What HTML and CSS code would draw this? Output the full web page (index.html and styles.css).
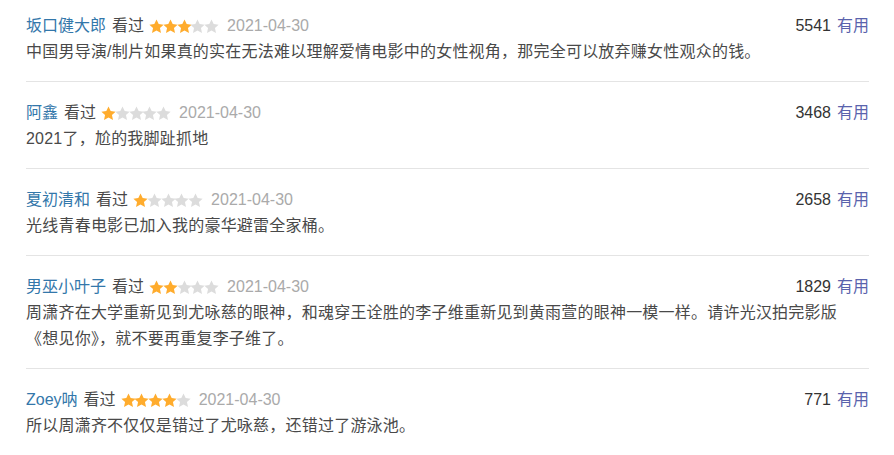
FILE: index.html
```html
<!DOCTYPE html>
<html lang="zh-CN">
<head>
<meta charset="utf-8">
<title>短评</title>
<link rel="stylesheet" href="styles.css">
</head>
<body>
<svg width="0" height="0" class="defs" aria-hidden="true">
  <defs>
    <symbol id="star" viewBox="0 0 20 20">
      <path d="M10 0.8l2.9 6 6.6.8-4.9 4.5 1.4 6.6L10 15.4l-6 3.3 1.4-6.6L.5 7.6l6.6-.8z"/>
    </symbol>
  </defs>
</svg>
<div class="comments">
  <div class="item">
    <div class="head">
      <div class="info">
        <a class="name">坂口健大郎</a><span class="watched">看过</span>
        <span class="stars"><svg class="on"><use href="#star"/></svg><svg class="on"><use href="#star"/></svg><svg class="on"><use href="#star"/></svg><svg><use href="#star"/></svg><svg><use href="#star"/></svg></span>
        <span class="date">2021-04-30</span>
      </div>
      <div class="votes"><span class="num">5541</span><a class="useful">有用</a></div>
    </div>
    <p class="text">中国男导演/制片如果真的实在无法难以理解爱情电影中的女性视角，那完全可以放弃赚女性观众的钱。</p>
  </div>
  <div class="item">
    <div class="head">
      <div class="info">
        <a class="name">阿鑫</a><span class="watched">看过</span>
        <span class="stars"><svg class="on"><use href="#star"/></svg><svg><use href="#star"/></svg><svg><use href="#star"/></svg><svg><use href="#star"/></svg><svg><use href="#star"/></svg></span>
        <span class="date">2021-04-30</span>
      </div>
      <div class="votes"><span class="num">3468</span><a class="useful">有用</a></div>
    </div>
    <p class="text">2021了，尬的我脚趾抓地</p>
  </div>
  <div class="item">
    <div class="head">
      <div class="info">
        <a class="name">夏初清和</a><span class="watched">看过</span>
        <span class="stars"><svg class="on"><use href="#star"/></svg><svg><use href="#star"/></svg><svg><use href="#star"/></svg><svg><use href="#star"/></svg><svg><use href="#star"/></svg></span>
        <span class="date">2021-04-30</span>
      </div>
      <div class="votes"><span class="num">2658</span><a class="useful">有用</a></div>
    </div>
    <p class="text">光线青春电影已加入我的豪华避雷全家桶。</p>
  </div>
  <div class="item">
    <div class="head">
      <div class="info">
        <a class="name">男巫小叶子</a><span class="watched">看过</span>
        <span class="stars"><svg class="on"><use href="#star"/></svg><svg class="on"><use href="#star"/></svg><svg><use href="#star"/></svg><svg><use href="#star"/></svg><svg><use href="#star"/></svg></span>
        <span class="date">2021-04-30</span>
      </div>
      <div class="votes"><span class="num">1829</span><a class="useful">有用</a></div>
    </div>
    <p class="text">周潇齐在大学重新见到尤咏慈的眼神，和魂穿王诠胜的李子维重新见到黄雨萱的眼神一模一样。请许光汉拍完影版《想见你》，就不要再重复李子维了。</p>
  </div>
  <div class="item">
    <div class="head">
      <div class="info">
        <a class="name">Zoey呐</a><span class="watched">看过</span>
        <span class="stars"><svg class="on"><use href="#star"/></svg><svg class="on"><use href="#star"/></svg><svg class="on"><use href="#star"/></svg><svg class="on"><use href="#star"/></svg><svg><use href="#star"/></svg></span>
        <span class="date">2021-04-30</span>
      </div>
      <div class="votes"><span class="num">771</span><a class="useful">有用</a></div>
    </div>
    <p class="text">所以周潇齐不仅仅是错过了尤咏慈，还错过了游泳池。</p>
  </div>
</div>
</body>
</html>
```

FILE: styles.css
```css
html, body {
  margin: 0;
  padding: 0;
  background: #fff;
}
body {
  font-family: "Liberation Sans", "Noto Sans CJK SC", sans-serif;
  font-size: 16px;
  line-height: 26px;
  color: #494949;
}
.defs {
  position: absolute;
  width: 0;
  height: 0;
}
.comments {
  margin: 0 25px 0 26px;
}
.item {
  padding: 18px 0 16px;
  border-bottom: 1px solid #e4e4e4;
}
.item:first-child {
  padding-top: 13px;
}
.item:last-child {
  border-bottom: none;
}
.head {
  display: flex;
  justify-content: space-between;
  align-items: center;
  height: 26px;
}
.info {
  display: flex;
  align-items: center;
}
.name {
  color: #3377aa;
}
.watched {
  margin-left: 6px;
  color: #494949;
}
.stars {
  display: flex;
  margin-left: 5px;
}
.stars svg {
  width: 15px;
  height: 15px;
  fill: #dcdcdc;
  margin-right: -1.2px;
}
.stars svg.on {
  fill: #ffac2d;
}
.date {
  margin-left: 9px;
  color: #aaaaaa;
}
.votes {
  display: flex;
  align-items: center;
}
.num {
  color: #333;
}
.useful {
  margin-left: 6px;
  color: #5a63ad;
}
.text {
  margin: 0;
  padding-right: 10px;
  letter-spacing: 0.22px;
}
```
